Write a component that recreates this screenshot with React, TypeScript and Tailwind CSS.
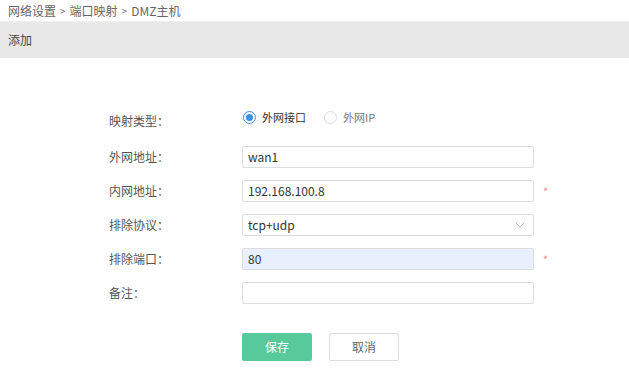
import { ChevronDown } from "lucide-react";

const font = { fontFamily: '"Noto Sans CJK SC", "Noto Sans", sans-serif' };

function Row({ label, required, children }: { label: string; required?: boolean; children: React.ReactNode }) {
  return (
    <div className="flex items-center h-[22px]">
      <div className="w-[133px] text-[12px] text-[#555]">{label}</div>
      <div className="w-[292px] h-full">{children}</div>
      {required && <span className="ml-[9px] text-[11px] text-[#f58a8a] leading-none">*</span>}
    </div>
  );
}

function Radio({ checked, label }: { checked?: boolean; label: string }) {
  return (
    <label className="flex items-center gap-[6px] text-[11px]">
      <span
        className={`w-[13px] h-[13px] rounded-full border flex items-center justify-center bg-white ${
          checked ? "border-[#3a8ee6]" : "border-[#dcdcdc]"
        }`}
      >
        {checked && <span className="w-[7px] h-[7px] rounded-full bg-[#3a8ee6]" />}
      </span>
      <span className={checked ? "text-[#333]" : "text-[#777]"}>{label}</span>
    </label>
  );
}

export default function App() {
  return (
    <div className="w-[629px] h-[391px] bg-white" style={font}>
      {/* breadcrumb */}
      <div className="h-[21px] px-[8px] flex items-center text-[12px] text-[#666] gap-[4px]">
        <span>网络设置</span>
        <span className="text-[10px]">&gt;</span>
        <span>端口映射</span>
        <span className="text-[10px]">&gt;</span>
        <span>DMZ主机</span>
      </div>
      <div className="h-[37px] bg-[#e8e8e8] border-t border-[#f0f0f0] px-[8px] flex items-center text-[12px] text-[#444]">
        添加
      </div>

      <div className="pl-[109px] pt-[48px]">
        <div className="flex items-center h-[22px] mb-[18px]">
          <div className="w-[133px] text-[12px] text-[#555] pt-[8px]">映射类型：</div>
          <div className="flex items-center gap-[18px] pl-[1px]">
            <Radio checked label="外网接口" />
            <Radio label="外网IP" />
          </div>
        </div>

        <div className="flex flex-col gap-[12px]">
          <Row label="外网地址：">
            <div className="h-full border border-[#dcdcdc] rounded-[2px] px-[5px] flex items-center text-[12px] text-[#333]">wan1</div>
          </Row>
          <Row label="内网地址：" required>
            <div className="h-full border border-[#dcdcdc] rounded-[2px] px-[5px] flex items-center text-[12px] text-[#333]">192.168.100.8</div>
          </Row>
          <Row label="排除协议：">
            <div className="h-full border border-[#dcdcdc] rounded-[2px] px-[5px] flex items-center justify-between text-[12px] text-[#333]">
              <span>tcp+udp</span>
              <ChevronDown className="w-[16px] h-[16px] text-[#aaa]" strokeWidth={1.25} />
            </div>
          </Row>
          <Row label="排除端口：" required>
            <div className="h-full border border-[#dcdcdc] rounded-[2px] px-[5px] flex items-center text-[12px] text-[#333] bg-[#e8f0fe]">80</div>
          </Row>
          <Row label="备注：">
            <div className="h-full border border-[#dcdcdc] rounded-[2px]" />
          </Row>
        </div>

        <div className="flex gap-[17px] pl-[133px] mt-[29px]">
          <button className="w-[70px] h-[28px] rounded-[2px] bg-[#57c99b] text-white text-[12px]">保存</button>
          <button className="w-[70px] h-[28px] rounded-[2px] border border-[#dcdcdc] bg-white text-[#666] text-[12px]">取消</button>
        </div>
      </div>
    </div>
  );
}
